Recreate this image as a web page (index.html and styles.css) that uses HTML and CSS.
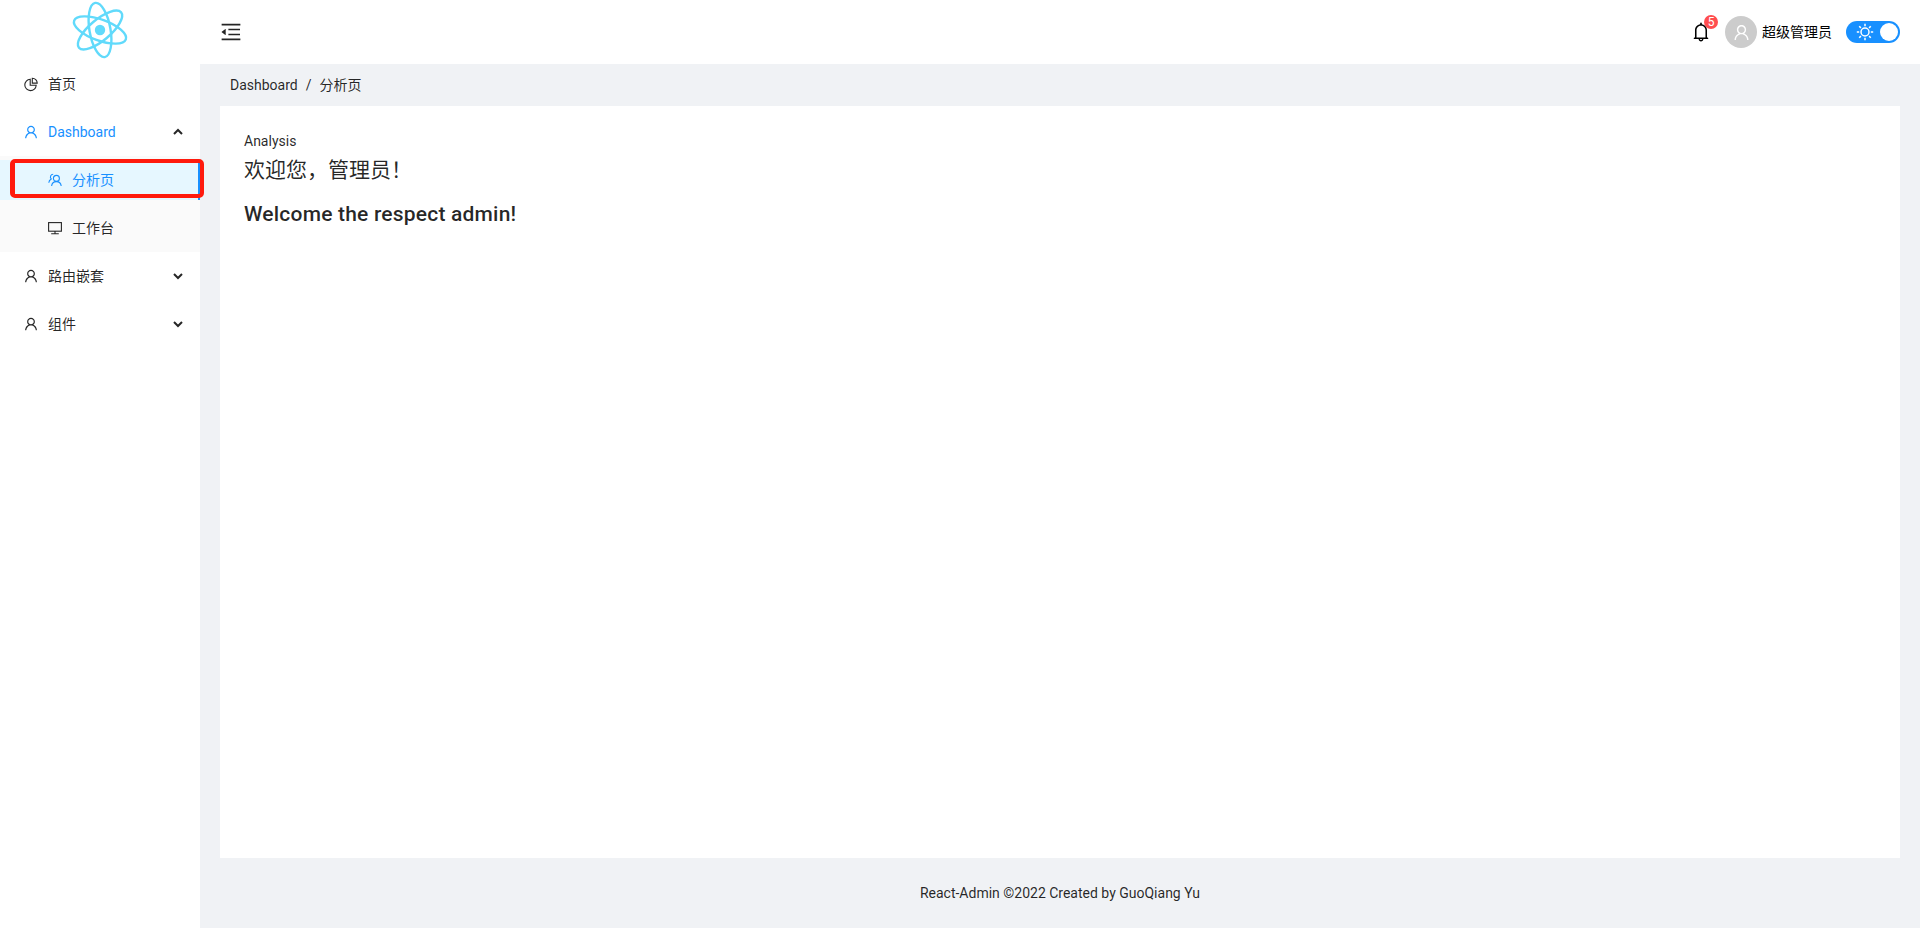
FILE: index.html
```html
<!DOCTYPE html>
<html lang="zh-CN">
<head>
    <meta charset="UTF-8">
    <meta name="viewport" content="width=device-width, initial-scale=1.0">
    <title>React-Admin</title>
    <link rel="stylesheet" href="styles.css">
</head>
<body>
    <svg class="icon-defs" width="0" height="0">
        <symbol id="i-user" viewBox="0 0 1024 1024"><path d="M858.5 763.6a374 374 0 0 0-80.6-119.5 375.63 375.63 0 0 0-119.5-80.6c-.4-.2-.8-.3-1.2-.5C719.5 518 760 444.7 760 362c0-137-111-248-248-248S264 225 264 362c0 82.7 40.5 156 102.8 201.1-.4.2-.8.3-1.2.5-44.8 18.9-85 46-119.5 80.6a375.63 375.63 0 0 0-80.6 119.5A371.7 371.7 0 0 0 136 901.8a8 8 0 0 0 8 8.2h60c4.4 0 7.9-3.5 8-7.8 2-77.2 33-149.5 87.8-204.3 56.7-56.7 132-87.9 212.2-87.9s155.5 31.2 212.2 87.9C779 752.7 810 825 812 902.2c.1 4.4 3.6 7.8 8 7.8h60a8 8 0 0 0 8-8.2c-1-47.8-10.9-94.3-29.5-138.2zM512 534c-45.9 0-89.1-17.9-121.6-50.4S340 407.9 340 362c0-45.9 17.9-89.1 50.4-121.6S466.1 190 512 190s89.1 17.9 121.6 50.4S684 316.1 684 362c0 45.9-17.9 89.1-50.4 121.6S557.9 534 512 534z"/></symbol>
        <symbol id="i-up" viewBox="0 0 12 12"><path d="M2 8l4-4 4 4" fill="none" stroke="currentColor" stroke-width="2"/></symbol>
        <symbol id="i-down" viewBox="0 0 12 12"><path d="M2 4l4 4 4-4" fill="none" stroke="currentColor" stroke-width="2"/></symbol>
    </svg>

    <div class="layout">
        <aside class="sider">
            <div class="logo">
                <svg width="60" height="60" viewBox="0 0 60 60" fill="none" stroke="#61dafb" stroke-width="2.4">
                    <circle cx="30" cy="30" r="5.2" fill="#61dafb" stroke="none"/>
                    <g transform="rotate(20 30 30)">
                        <ellipse cx="30" cy="30" rx="27.5" ry="10.5"/>
                        <ellipse cx="30" cy="30" rx="27.5" ry="10.5" transform="rotate(60 30 30)"/>
                        <ellipse cx="30" cy="30" rx="27.5" ry="10.5" transform="rotate(120 30 30)"/>
                    </g>
                </svg>
            </div>
            <nav class="menu">
                <div class="menu-item">
                    <svg class="menu-icon" viewBox="0 0 16 16" fill="none" stroke="currentColor" stroke-width="1.1">
                        <path d="M7.200 3.200a5.700 5.700 0 1 0 6 6H7.200z"/>
                        <path d="M9.300 2.200a4.900 4.900 0 0 1 4.900 4.900H9.300z"/>
                    </svg>
                    <span>首页</span>
                </div>
                <div class="menu-item is-open">
                    <svg class="menu-icon"><use href="#i-user"/></svg>
                    <span>Dashboard</span>
                    <svg class="menu-arrow"><use href="#i-up"/></svg>
                </div>
                <div class="submenu">
                    <div class="menu-item sub-item is-active">
                        <svg class="menu-icon sub-icon" viewBox="0 0 14 14" fill="none" stroke="currentColor" stroke-width="1.1">
                            <circle cx="8.400" cy="5.400" r="3"/>
                            <path d="M3.600 13c.3-2.800 2.200-4.400 4.800-4.400s4.500 1.600 4.800 4.400"/>
                            <path d="M5.200 1.300a2.700 2.700 0 0 0-2 4.600C1.800 6.700.9 8 .8 9.800"/>
                        </svg>
                        <span>分析页</span>
                    </div>
                    <div class="menu-item sub-item">
                        <svg class="menu-icon sub-icon" viewBox="0 0 14 14" fill="none" stroke="currentColor" stroke-width="1.1">
                            <rect x="0.600" y="1.600" width="12.800" height="8.600"/>
                            <path d="M7 10.200v2.400M3.200 12.800h7.600"/>
                        </svg>
                        <span>工作台</span>
                    </div>
                </div>
                <div class="menu-item">
                    <svg class="menu-icon"><use href="#i-user"/></svg>
                    <span>路由嵌套</span>
                    <svg class="menu-arrow"><use href="#i-down"/></svg>
                </div>
                <div class="menu-item">
                    <svg class="menu-icon"><use href="#i-user"/></svg>
                    <span>组件</span>
                    <svg class="menu-arrow"><use href="#i-down"/></svg>
                </div>
            </nav>
        </aside>

        <div class="main">
            <header class="header">
                <svg class="trigger" viewBox="0 0 1024 1024"><path d="M408 442h480c4.400 0 8-3.600 8-8v-56c0-4.400-3.600-8-8-8H408c-4.400 0-8 3.600-8 8v56c0 4.400 3.600 8 8 8zm-8 204c0 4.400 3.600 8 8 8h480c4.400 0 8-3.600 8-8v-56c0-4.400-3.600-8-8-8H408c-4.400 0-8 3.600-8 8v56zm504-486H120c-4.400 0-8 3.600-8 8v56c0 4.400 3.600 8 8 8h784c4.400 0 8-3.600 8-8v-56c0-4.400-3.600-8-8-8zm0 632H120c-4.400 0-8 3.600-8 8v56c0 4.400 3.600 8 8 8h784c4.400 0 8-3.600 8-8v-56c0-4.400-3.600-8-8-8zM115.400 518.900L271.700 642c5.800 4.600 14.400.5 14.400-6.900V388.900c0-7.400-8.500-11.500-14.400-6.900L115.400 505.100a8.900 8.900 0 0 0 0 13.800z"/></svg>
                <div class="header-right">
                    <div class="bell">
                        <svg class="bell-icon" viewBox="0 0 1024 1024"><path d="M816 768h-24V428c0-141.100-104.300-257.700-240-277.100V112c0-22.100-17.900-40-40-40s-40 17.900-40 40v38.900c-135.700 19.400-240 136-240 277.100v340h-24c-17.700 0-32 14.300-32 32v32c0 4.400 3.600 8 8 8h216c0 61.800 50.200 112 112 112s112-50.200 112-112h216c4.400 0 8-3.600 8-8v-32c0-17.700-14.300-32-32-32zM512 888c-26.500 0-48-21.500-48-48h96c0 26.500-21.500 48-48 48zM304 768V428c0-55.600 21.600-107.800 60.900-147.100S456.400 220 512 220c55.600 0 107.800 21.600 147.100 60.900S720 372.400 720 428v340H304z"/></svg>
                        <span class="badge">5</span>
                    </div>
                    <div class="avatar">
                        <svg width="19" height="19"><use href="#i-user"/></svg>
                    </div>
                    <span class="username">超级管理员</span>
                    <div class="switch">
                        <svg width="18" height="18" viewBox="0 0 18 18" fill="none" stroke="#fff" stroke-width="1.500">
                            <circle cx="9" cy="9" r="4"/>
                            <path d="M9 .8v2.400M9 14.800v2.400M.8 9h2.400M14.800 9h2.400M3.200 3.200l1.700 1.700M13.100 13.100l1.700 1.700M3.200 14.800l1.700-1.700M13.100 4.900l1.700-1.700"/>
                        </svg>
                        <span class="switch-knob"></span>
                    </div>
                </div>
            </header>

            <div class="breadcrumb">
                <span>Dashboard</span>
                <span>/</span>
                <span>分析页</span>
            </div>

            <main class="content">
                <div class="content-label">Analysis</div>
                <div class="content-hello">欢迎您，管理员！</div>
                <div class="content-title">Welcome the respect admin!</div>
            </main>

            <footer class="footer">React-Admin ©2022 Created by GuoQiang Yu</footer>
        </div>
    </div>

    <div class="marker"></div>
</body>
</html>
```

FILE: styles.css
```css
* {
    box-sizing: border-box;
}

html, body {
    height: 100%;
}

body {
    margin: 0;
    font-family: Roboto, "Noto Sans CJK SC", sans-serif;
    font-size: 14px;
    line-height: 22px;
    color: rgba(0, 0, 0, 0.85);
    background-color: #f0f2f5;
}

.icon-defs {
    position: absolute;
}

.layout {
    display: flex;
    height: 100vh;
}

/* sider */
.sider {
    width: 200px;
    flex-shrink: 0;
    background-color: #fff;
}

.logo {
    height: 60px;
    display: flex;
    justify-content: center;
    align-items: center;
}

.menu {
    padding-top: 4px;
}

.menu-item {
    display: flex;
    align-items: center;
    height: 40px;
    margin-bottom: 8px;
    padding-left: 23px;
    padding-right: 16px;
}

.menu-icon {
    width: 16px;
    height: 16px;
    margin-right: 9px;
    fill: currentColor;
    flex-shrink: 0;
}

.menu-icon[fill="none"] {
    fill: none;
}

.sub-icon {
    width: 14px;
    height: 14px;
    margin-right: 10px;
}

.menu-arrow {
    width: 12px;
    height: 12px;
    margin-left: auto;
    color: rgba(0, 0, 0, 0.85);
}

.is-open {
    color: #1890ff;
}

.submenu {
    background-color: #fafafa;
    padding-top: 4px;
    margin-top: -4px;
    margin-bottom: 4px;
    padding-bottom: 4px;
}

.sub-item {
    padding-left: 48px;
}

.sub-item:last-child {
    margin-bottom: 0;
}

.is-active {
    color: #1890ff;
    background-color: #e6f7ff;
    border-right: 2px solid #1890ff;
}

/* header */
.main {
    flex: 1;
    display: flex;
    flex-direction: column;
    min-width: 0;
}

.header {
    height: 64px;
    flex-shrink: 0;
    display: flex;
    align-items: center;
    justify-content: space-between;
    padding: 0 20px 0 19px;
    background-color: #fff;
}

.trigger {
    width: 24px;
    height: 24px;
    fill: #000;
    opacity: 0.85;
}

.header-right {
    display: flex;
    align-items: center;
}

.bell {
    position: relative;
    display: flex;
    margin-right: 13px;
}

.bell-icon {
    width: 22px;
    height: 22px;
    fill: #000;
}

.badge {
    position: absolute;
    top: -6px;
    right: -6px;
    width: 14px;
    height: 14px;
    border-radius: 50%;
    background-color: #ff4d4f;
    color: #fff;
    font-size: 12px;
    line-height: 14px;
    text-align: center;
}

.avatar {
    width: 32px;
    height: 32px;
    border-radius: 50%;
    background-color: #ccc;
    display: flex;
    justify-content: center;
    align-items: center;
    fill: #fff;
}

.username {
    margin-left: 5px;
    margin-right: 14px;
    color: #000;
}

.switch {
    position: relative;
    width: 54px;
    height: 22px;
    border-radius: 11px;
    background-color: #1890ff;
    display: flex;
    align-items: center;
    padding-left: 10px;
}

.switch-knob {
    position: absolute;
    top: 2px;
    right: 2px;
    width: 18px;
    height: 18px;
    border-radius: 50%;
    background-color: #fff;
}

/* content */
.breadcrumb {
    height: 42px;
    flex-shrink: 0;
    padding: 10px 0 0 30px;
    display: flex;
    gap: 8px;
}

.content {
    flex: 1;
    margin: 0 20px;
    padding: 24px;
    background-color: #fff;
}

.content-hello {
    font-size: 21px;
    line-height: 32px;
    padding-top: 2px;
}

.content-title {
    margin-top: 12px;
    font-size: 21px;
    font-weight: 500;
    letter-spacing: 0.2px;
    line-height: 32px;
}

.footer {
    height: 70px;
    flex-shrink: 0;
    display: flex;
    justify-content: center;
    align-items: center;
}

/* red annotation box round the selected item */
.marker {
    position: absolute;
    left: 10px;
    top: 159px;
    width: 194px;
    height: 39px;
    border: 4px solid #ff1a0d;
    border-left-width: 5px;
    border-radius: 5px;
}
```
